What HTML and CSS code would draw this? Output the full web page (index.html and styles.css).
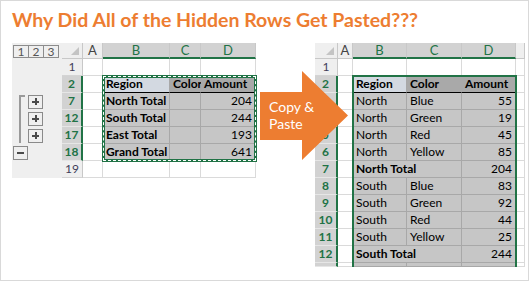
FILE: index.html
```html
<!DOCTYPE html>
<html lang="en">
<head>
    <meta charset="UTF-8">
    <title>Why Did All of the Hidden Rows Get Pasted???</title>
    <link rel="stylesheet" href="styles.css">
</head>
<body>
    <div class="frame">
        <h1 class="title">Why Did All of the Hidden Rows Get Pasted???</h1>

        <div class="sheets">
            <!-- grouped sheet, only subtotal rows visible -->
            <div class="sheet sheet-left">
                <div class="outline">
                    <div class="levels"><span>1</span><span>2</span><span>3</span></div>
                    <div class="bracket"></div>
                    <div class="obtn plus r7"></div>
                    <div class="obtn plus r12"></div>
                    <div class="obtn plus r17"></div>
                    <div class="obtn minus r18"></div>
                </div>

                <div class="corner"></div>
                <div class="ch">A</div>
                <div class="ch sel">B</div>
                <div class="ch sel">C</div>
                <div class="ch sel">D</div>

                <div class="rh">1</div>
                <div class="c"></div><div class="c"></div><div class="c"></div><div class="c"></div>

                <div class="rh sel">2</div>
                <div class="c"></div>
                <div class="c hb">Region</div>
                <div class="c hg">Color</div>
                <div class="c hg">Amount</div>

                <div class="rh sel">7</div>
                <div class="c"></div>
                <div class="c s b">North Total</div>
                <div class="c s"></div>
                <div class="c s num">204</div>

                <div class="rh sel">12</div>
                <div class="c"></div>
                <div class="c s b">South Total</div>
                <div class="c s"></div>
                <div class="c s num">244</div>

                <div class="rh sel">17</div>
                <div class="c"></div>
                <div class="c s b">East Total</div>
                <div class="c s"></div>
                <div class="c s num">193</div>

                <div class="rh sel">18</div>
                <div class="c"></div>
                <div class="c s b">Grand Total</div>
                <div class="c s"></div>
                <div class="c s num">641</div>

                <div class="rh">19</div>
                <div class="c"></div><div class="c"></div><div class="c"></div><div class="c"></div>

                <div class="ants"></div>
            </div>

            <!-- pasted result, every row came along -->
            <div class="sheet sheet-right">
                <div class="corner"></div>
                <div class="ch">A</div>
                <div class="ch sel">B</div>
                <div class="ch sel">C</div>
                <div class="ch sel">D</div>
                <div class="ch"></div>

                <div class="rh">1</div>
                <div class="c"></div><div class="c"></div><div class="c"></div><div class="c"></div><div class="c"></div>

                <div class="rh sel">2</div>
                <div class="c"></div>
                <div class="c hb">Region</div>
                <div class="c hg b">Color</div>
                <div class="c hg b">Amount</div>
                <div class="c"></div>

                <div class="rh sel">3</div>
                <div class="c"></div><div class="c s">North</div><div class="c s">Blue</div><div class="c s num">55</div><div class="c"></div>
                <div class="rh sel">4</div>
                <div class="c"></div><div class="c s">North</div><div class="c s">Green</div><div class="c s num">19</div><div class="c"></div>
                <div class="rh sel">5</div>
                <div class="c"></div><div class="c s">North</div><div class="c s">Red</div><div class="c s num">45</div><div class="c"></div>
                <div class="rh sel">6</div>
                <div class="c"></div><div class="c s">North</div><div class="c s">Yellow</div><div class="c s num">85</div><div class="c"></div>
                <div class="rh sel">7</div>
                <div class="c"></div><div class="c s b span2">North Total</div><div class="c s num">204</div><div class="c"></div>
                <div class="rh sel">8</div>
                <div class="c"></div><div class="c s">South</div><div class="c s">Blue</div><div class="c s num">83</div><div class="c"></div>
                <div class="rh sel">9</div>
                <div class="c"></div><div class="c s">South</div><div class="c s">Green</div><div class="c s num">92</div><div class="c"></div>
                <div class="rh sel">10</div>
                <div class="c"></div><div class="c s">South</div><div class="c s">Red</div><div class="c s num">44</div><div class="c"></div>
                <div class="rh sel">11</div>
                <div class="c"></div><div class="c s">South</div><div class="c s">Yellow</div><div class="c s num">25</div><div class="c"></div>
                <div class="rh sel">12</div>
                <div class="c"></div><div class="c s b span2">South Total</div><div class="c s num">244</div><div class="c"></div>
                <div class="rh sel"></div>
                <div class="c"></div><div class="c s"></div><div class="c s"></div><div class="c s"></div><div class="c"></div>

                <div class="copysel"></div>
            </div>
        </div>

        <div class="arrow">
            <svg width="89" height="91" viewBox="0 0 89 91">
                <polygon points="0,22 42,22 42,1 88,45.5 42,90 42,70 0,70" fill="#ed7d31"/>
            </svg>
            <span class="arrow-text">Copy &amp;<br>Paste</span>
        </div>
    </div>
</body>
</html>
```

FILE: styles.css
```css
:root {
    --green: #217346;
    --orange: #ed7d31;
    --head-bg: #efefef;
    --head-sel: #d2d2d2;
    --grid: #dadada;
    --cell-sel: #c6c6c6;
}

body {
    margin: 0;
    background: #fff;
    font-family: Lato, 'Liberation Sans', sans-serif;
}

.frame {
    position: relative;
    width: 529px;
    height: 281px;
    box-sizing: border-box;
    border: 1px solid #d9d9d9;
    overflow: hidden;
}

.title {
    margin: 0;
    height: 42px;
    box-sizing: border-box;
    padding: 8px 0 0 11px;
    font-size: 19.5px;
    line-height: 22px;
    font-weight: 700;
    color: var(--orange);
    white-space: nowrap;
}

.sheets {
    display: flex;
    gap: 59px;
    padding-left: 11px;
}

.sheet {
    position: relative;
    display: grid;
    font-size: 12px;
    color: #000;
}

.sheet-left {
    grid-template-columns: 50px 21px 20px 67px 31px 55px;
    grid-template-rows: 16px repeat(7, 17px);
}

.sheet-right {
    grid-template-columns: 23px 15px 54px 55px 54px 9px;
    grid-template-rows: 16px repeat(12, 17px) 4px;
    overflow: hidden;
}

/* headers */
.corner {
    display: flex;
    justify-content: flex-end;
    align-items: flex-end;
    padding: 0 3px 3px 0;
    box-sizing: border-box;
    background: var(--head-bg);
    border-right: 1px solid #c8c8c8;
    border-bottom: 1px solid #c8c8c8;
}

.corner::after {
    content: "";
    width: 0;
    height: 0;
    border-left: 8px solid transparent;
    border-bottom: 8px solid #c4c4c4;
}

.ch {
    background: var(--head-bg);
    border-right: 1px solid #c8c8c8;
    border-bottom: 1px solid #c8c8c8;
    box-sizing: border-box;
    text-align: center;
    font-size: 13px;
    line-height: 15px;
    color: #444;
}

.ch.sel {
    background: var(--head-sel);
    color: var(--green);
    border-bottom: 2px solid var(--green);
}

.rh {
    background: var(--head-bg);
    border-right: 1px solid #c8c8c8;
    border-bottom: 1px solid #d4d4d4;
    box-sizing: border-box;
    text-align: center;
    font-size: 12px;
    line-height: 16px;
    color: #3f3d5a;
}

.rh.sel {
    background: var(--head-sel);
    color: var(--green);
    font-weight: 700;
    border-right: 2px solid var(--green);
    border-bottom-color: #e6e6e6;
}

/* cells */
.c {
    border-right: 1px solid var(--grid);
    border-bottom: 1px solid var(--grid);
    box-sizing: border-box;
    padding: 0 3px;
    line-height: 16px;
    white-space: nowrap;
}

.c.s {
    background: var(--cell-sel);
    border-color: #a8a8a8;
}

.c.hb {
    background: #d3d9e1;
    border-right-color: #a8a8a8;
    border-bottom-color: #000;
    font-weight: 700;
}

.c.hg {
    background: #a9a9a9;
    border-right-color: #a9a9a9;
    border-bottom-color: #000;
}

.sheet-left .c.hg {
    font-weight: 700;
}

.c.b {
    font-weight: 700;
}

.c.num {
    text-align: right;
}

.span2 {
    grid-column: span 2;
}

/* outline pane */
.outline {
    grid-column: 1;
    grid-row: 1 / -1;
    display: grid;
    grid-template-columns: 1px 15px 15px 1fr;
    grid-template-rows: 16px repeat(7, 17px);
    background: var(--head-bg);
}

.levels {
    grid-row: 1;
    grid-column: 2 / 5;
    align-self: center;
    display: flex;
}

.levels span {
    width: 16px;
    height: 13px;
    margin-right: -1px;
    box-sizing: border-box;
    border: 1px solid #8c8c8c;
    font-size: 12px;
    line-height: 11px;
    text-align: center;
    color: #555;
}

.bracket {
    grid-column: 2;
    grid-row: 4 / 7;
    width: 4px;
    margin: 2px 0 1px 6px;
    border-left: 2px solid #9a9a9a;
    border-top: 2px solid #9a9a9a;
}

.obtn {
    position: relative;
    align-self: center;
    width: 15px;
    height: 14px;
    box-sizing: border-box;
    border: 1px solid #8a8a8a;
}

.obtn::before {
    content: "";
    position: absolute;
    left: 3px;
    top: 5px;
    width: 7px;
    height: 2px;
    background: #4a4a4a;
}

.obtn.plus::after {
    content: "";
    position: absolute;
    left: 5.5px;
    top: 2.5px;
    width: 2px;
    height: 7px;
    background: #4a4a4a;
}

.plus { grid-column: 3; }
.minus { grid-column: 2; }
.r7 { grid-row: 4; }
.r12 { grid-row: 5; }
.r17 { grid-row: 6; }
.r18 { grid-row: 7; }

/* copy marquee over B2:D18 */
.ants {
    position: absolute;
    left: 90px;
    top: 32px;
    width: 155px;
    height: 87px;
    box-sizing: border-box;
    border: 3px solid var(--green);
}

.ants::after {
    content: "";
    position: absolute;
    inset: -2px;
    border: 1px dashed #fff;
}

/* pasted range outline */
.copysel {
    position: absolute;
    left: 37px;
    top: 32px;
    width: 165px;
    height: 200px;
    box-sizing: border-box;
    border: 2px solid var(--green);
    border-bottom: none;
}

/* arrow callout */
.arrow {
    position: absolute;
    left: 259px;
    top: 69px;
    width: 89px;
    height: 91px;
}

.arrow svg {
    display: block;
}

.arrow-text {
    position: absolute;
    left: 9px;
    top: 28px;
    font-size: 14px;
    line-height: 17px;
    color: #fff;
    white-space: nowrap;
}
```
